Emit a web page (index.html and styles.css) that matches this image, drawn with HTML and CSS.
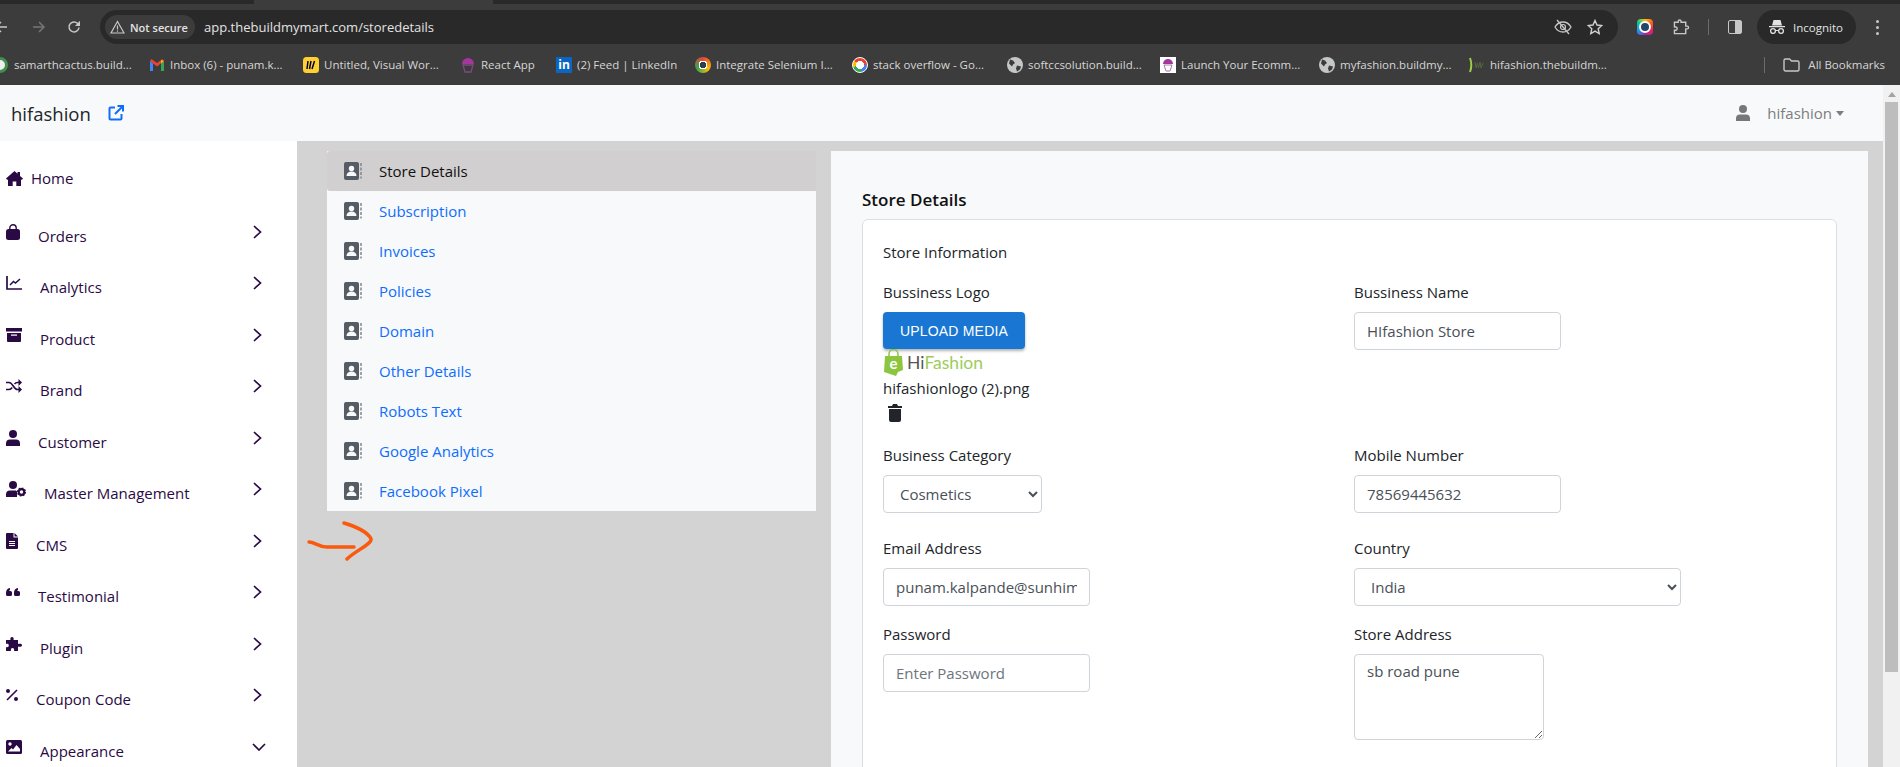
FILE: index.html
```html
<!DOCTYPE html>
<html lang="en">

<head>
    <meta charset="UTF-8" />
    <meta name="viewport" content="width=device-width, initial-scale=1.0" />
    <title>Store Details | hifashion</title>
    <link rel="stylesheet" href="styles.css">
</head>

<body>
    <!-- Browser frame -->
    <div class="tabstrip"><div class="active-tab"></div></div>
    <div class="toolbar">
        <div class="nav-btns">
            <svg class="back" width="14" height="14" viewBox="0 0 14 14"><path d="M13 7H2M7 2L2 7l5 5" fill="none" stroke="#c7c7c7" stroke-width="1.5"/></svg>
            <svg class="forward" width="14" height="14" viewBox="0 0 14 14"><path d="M1 7h11M7 2l5 5-5 5" fill="none" stroke="#757575" stroke-width="1.5"/></svg>
            <svg class="reload" width="14" height="14" viewBox="0 0 14 14"><path d="M12 7.5A5 5 0 1 1 10.4 3.2L12 5" fill="none" stroke="#c7c7c7" stroke-width="1.5"/><path d="M13 0.800V6H8z" fill="#c7c7c7"/></svg>
        </div>
        <div class="address">
            <div class="chip">
                <svg width="15" height="14" viewBox="0 0 15 14"><path d="M7.500 1.500L14 13H1zM7.500 5.500v4M7.500 10.500v1.200" fill="none" stroke="#c7c7c7" stroke-width="1.200"/></svg>
                <span>Not secure</span>
            </div>
            <span class="url">app.thebuildmymart.com/storedetails</span>
            <svg class="eye" width="18" height="16" viewBox="0 0 18 16"><path d="M1 8c2-3.500 5-5 8-5s6 1.500 8 5c-2 3.500-5 5-8 5s-6-1.500-8-5z" fill="none" stroke="#c7c7c7" stroke-width="1.300"/><circle cx="9" cy="8" r="2.500" fill="none" stroke="#c7c7c7" stroke-width="1.200"/><path d="M3 1l12 14" stroke="#c7c7c7" stroke-width="1.300"/></svg>
            <svg class="star" width="16" height="16" viewBox="0 0 16 16"><path d="M8 1.500l2 4.500 4.800.5-3.600 3.200 1 4.800L8 12.100 3.800 14.500l1-4.800L1.200 6.500 6 6z" fill="none" stroke="#d0d0d0" stroke-width="1.400"/></svg>
        </div>
        <div class="tools">
            <div class="color-app"><div class="color-app-ring"></div></div>
            <svg class="puzzle" width="17" height="16" viewBox="0 0 17 16"><path d="M1 3h4V2a1.500 1.500 0 0 1 3 0v1h5v4h1.500a1.500 1.500 0 0 1 0 3H13v5H1v-3.500h1.500a1.800 1.800 0 0 0 0-3.500H1z" transform="translate(.5 .5) scale(.94)" fill="none" stroke="#c7c7c7" stroke-width="1.500"/></svg>
            <div class="tool-sep"></div>
            <div class="side-panel"><div class="side-panel-fill"></div></div>
            <div class="incognito">
                <svg width="16" height="16" viewBox="0 0 16 16"><path d="M0 7h16v1.200H0zM3 6.500L4.500 1h7L13 6.500z" fill="#e3e3e3"/><circle cx="4" cy="12" r="2.400" fill="none" stroke="#e3e3e3" stroke-width="1.300"/><circle cx="12" cy="12" r="2.400" fill="none" stroke="#e3e3e3" stroke-width="1.300"/><path d="M6.400 11.500h3.200" stroke="#e3e3e3"/></svg>
                <span>Incognito</span>
            </div>
            <div class="dots"><i></i><i></i><i></i></div>
        </div>
    </div>

    <div class="bookmarks">
        <div class="bm bm-first"><span class="fav fav-first"></span><span>samarthcactus.build...</span></div>
        <div class="bm">
            <svg width="16" height="14" viewBox="0 0 16 14"><path d="M1 13V3l3 2.500V13z" fill="#4285f4"/><path d="M15 13V3l-3 2.500V13z" fill="#34a853"/><path d="M1 3l7 5.500L15 3l-1.500-2L8 5 2.500 1z" fill="#ea4335"/><path d="M12 5.500V2l3 1z" fill="#fbbc04"/></svg>
            <span>Inbox (6) - punam.k...</span>
        </div>
        <div class="bm">
            <svg width="16" height="16" viewBox="0 0 16 16"><rect width="16" height="16" rx="3.500" fill="#ffd02f"/><path d="M5 4L4 12M8 4L6.500 12M11.500 4L9 12" stroke="#050038" stroke-width="1.500"/></svg>
            <span>Untitled, Visual Wor...</span>
        </div>
        <div class="bm">
            <svg width="16" height="16" viewBox="0 0 16 16"><path d="M2 7a6 6 0 0 1 12 0z" fill="#a3379b"/><path d="M3 8h10l-2 7H5z" fill="none" stroke="#7d4a80" stroke-width="1.300"/></svg>
            <span>React App</span>
        </div>
        <div class="bm">
            <span class="fav fav-in">in</span>
            <span>(2) Feed | LinkedIn</span>
        </div>
        <div class="bm">
            <span class="fav fav-chrome"></span>
            <span>Integrate Selenium I...</span>
        </div>
        <div class="bm">
            <span class="fav fav-google"></span>
            <span>stack overflow - Go...</span>
        </div>
        <div class="bm">
            <svg width="16" height="16" viewBox="0 0 16 16"><circle cx="8" cy="8" r="8" fill="#c4c7c5"/><path d="M3 2.500l3 1 2 2.500-2 1.500-1 2-3-3zM10 8.500l4 1-1 3-3 2-1-3z" fill="#3c3c3c"/></svg>
            <span>softccsolution.build...</span>
        </div>
        <div class="bm">
            <svg width="16" height="16" viewBox="0 0 16 16"><rect width="16" height="16" fill="#fff"/><path d="M3 7a5 5 0 0 1 10 0z" fill="#a3379b"/><path d="M4 8h8l-2 6H6z" fill="none" stroke="#a77ba8"/></svg>
            <span>Launch Your Ecomm...</span>
        </div>
        <div class="bm">
            <svg width="16" height="16" viewBox="0 0 16 16"><circle cx="8" cy="8" r="8" fill="#c4c7c5"/><path d="M3 2.500l3 1 2 2.500-2 1.500-1 2-3-3zM10 8.500l4 1-1 3-3 2-1-3z" fill="#3c3c3c"/></svg>
            <span>myfashion.buildmy...</span>
        </div>
        <div class="bm">
            <svg width="16" height="16" viewBox="0 0 16 16"><path d="M1 1c1.500 4 1.500 10 0 14" fill="none" stroke="#9acd4a" stroke-width="2"/><path d="M6 5l1 6 1.500-5 1 5L11 5l1 6 2-5" fill="none" stroke="#55663a"/></svg>
            <span>hifashion.thebuildm...</span>
        </div>
        <div class="all-bm">
            <svg width="17" height="14" viewBox="0 0 17 14"><path d="M1 2.500A1.500 1.500 0 0 1 2.500 1h4l2 2h6A1.500 1.500 0 0 1 16 4.500v7a1.500 1.500 0 0 1-1.500 1.500h-12A1.500 1.500 0 0 1 1 11.500z" fill="none" stroke="#c7c7c7" stroke-width="1.400"/></svg>
            <span>All Bookmarks</span>
        </div>
    </div>

    <div class="page">
        <div class="app">
            <nav class="navbar">
                <span class="brand">hifashion</span>
                <svg class="ext-link" width="16" height="16" viewBox="0 0 16 16"><path d="M7 2.500H2.500a1 1 0 0 0-1 1v10a1 1 0 0 0 1 1h10a1 1 0 0 0 1-1V9M9.500 1H15v5.500M15 1L7 9" fill="none" stroke="#0d6efd" stroke-width="2"/></svg>
                <svg class="nav-user" width="16" height="16" viewBox="0 0 14 16"><circle cx="7" cy="4" r="4" fill="#777"/><path d="M0 16v-2.500A4 4 0 0 1 4 9.500h6a4 4 0 0 1 4 4V16z" fill="#777"/></svg>
                <span class="nav-name">hifashion</span>
                <span class="caret"></span>
            </nav>

            <div class="layout">
                <aside class="sidebar">
                    <a class="side-link side-home">
                        <svg width="17" height="15" viewBox="0 0 17 15"><path d="M8.500 0L11.500 2.700V1h2.500v4L17 7.600 15.800 9 15 8.300V15h-4.700v-4.500H6.700V15H2V8.300L1.200 9 0 7.600z"/></svg>
                        <span>Home</span>
                    </a>
                    <a class="side-link">
                        <svg width="14" height="16" viewBox="0 0 14 16"><rect y="5" width="14" height="11" rx="2.500"/><path d="M3.800 7V4a3.200 3.200 0 0 1 6.400 0v3" fill="none" stroke="currentColor" stroke-width="1.400"/></svg>
                        <span>Orders</span>
                        <svg class="chev" width="9" height="14" viewBox="0 0 9 14"><path d="M1 1l6.500 6L1 13" fill="none" stroke="currentColor" stroke-width="1.700"/></svg>
                    </a>
                    <a class="side-link">
                        <svg width="16" height="14" viewBox="0 0 16 14"><path d="M1 0v13h15" fill="none" stroke="currentColor" stroke-width="1.700"/><path d="M4 9l3.500-3.500 2 1.500L14 3" fill="none" stroke="currentColor" stroke-width="1.500"/></svg>
                        <span>Analytics</span>
                        <svg class="chev" width="9" height="14" viewBox="0 0 9 14"><path d="M1 1l6.500 6L1 13" fill="none" stroke="currentColor" stroke-width="1.700"/></svg>
                    </a>
                    <a class="side-link">
                        <svg width="16" height="14" viewBox="0 0 16 14"><rect width="16" height="3.500"/><path d="M1 5h14v8a1 1 0 0 1-1 1H2a1 1 0 0 1-1-1z"/><rect x="5" y="6.500" width="6" height="1.200" fill="#fff"/></svg>
                        <span>Product</span>
                        <svg class="chev" width="9" height="14" viewBox="0 0 9 14"><path d="M1 1l6.500 6L1 13" fill="none" stroke="currentColor" stroke-width="1.700"/></svg>
                    </a>
                    <a class="side-link">
                        <svg width="16" height="14" viewBox="0 0 16 14"><path d="M0 3.500h3c4 0 4.500 7 8.500 7H13M0 10.500h3c1.500 0 2.500-1 3.200-2M8.500 5c.8-1 1.700-1.500 3-1.500H13" fill="none" stroke="currentColor" stroke-width="1.600"/><path d="M12.500 0L16 3.500 12.500 7zM12.500 7L16 10.500 12.500 14z"/></svg>
                        <span>Brand</span>
                        <svg class="chev" width="9" height="14" viewBox="0 0 9 14"><path d="M1 1l6.500 6L1 13" fill="none" stroke="currentColor" stroke-width="1.700"/></svg>
                    </a>
                    <a class="side-link">
                        <svg width="14" height="16" viewBox="0 0 14 16"><circle cx="7" cy="4" r="4"/><path d="M0 16v-2.500A4 4 0 0 1 4 9.500h6a4 4 0 0 1 4 4V16z"/></svg>
                        <span>Customer</span>
                        <svg class="chev" width="9" height="14" viewBox="0 0 9 14"><path d="M1 1l6.500 6L1 13" fill="none" stroke="currentColor" stroke-width="1.700"/></svg>
                    </a>
                    <a class="side-link">
                        <svg width="20" height="16" viewBox="0 0 20 16"><circle cx="7" cy="4" r="4"/><path d="M0 16v-2.500A4 4 0 0 1 4 9.500h6l1 1v5.500z"/><circle cx="15.500" cy="11" r="2.800" fill="none" stroke="currentColor" stroke-width="2.200"/><circle cx="15.500" cy="11" r="4" fill="none" stroke="currentColor" stroke-width="1.200" stroke-dasharray="1.600 1.500"/></svg>
                        <span>Master Management</span>
                        <svg class="chev" width="9" height="14" viewBox="0 0 9 14"><path d="M1 1l6.500 6L1 13" fill="none" stroke="currentColor" stroke-width="1.700"/></svg>
                    </a>
                    <a class="side-link">
                        <svg width="12" height="16" viewBox="0 0 12 16"><path d="M1 0h6.500v4.500H12V15a1 1 0 0 1-1 1H1a1 1 0 0 1-1-1V1a1 1 0 0 1 1-1zM8.500 0L12 3.500H8.500z"/><path d="M3 8.500h6M3 10.500h6M3 12.500h6" stroke="#fff"/></svg>
                        <span>CMS</span>
                        <svg class="chev" width="9" height="14" viewBox="0 0 9 14"><path d="M1 1l6.500 6L1 13" fill="none" stroke="currentColor" stroke-width="1.700"/></svg>
                    </a>
                    <a class="side-link">
                        <svg width="14" height="8" viewBox="0 0 14 8"><path d="M0 5a5 5 0 0 1 4-5v2a2 2 0 0 0-1 1h1.500A1.500 1.500 0 0 1 6 4.500v2A1.500 1.500 0 0 1 4.500 8h-3A1.500 1.500 0 0 1 0 6.500zM8 5a5 5 0 0 1 4-5v2a2 2 0 0 0-1 1h1.500A1.500 1.500 0 0 1 14 4.500v2A1.500 1.500 0 0 1 12.500 8h-3A1.500 1.500 0 0 1 8 6.500z"/></svg>
                        <span>Testimonial</span>
                        <svg class="chev" width="9" height="14" viewBox="0 0 9 14"><path d="M1 1l6.500 6L1 13" fill="none" stroke="currentColor" stroke-width="1.700"/></svg>
                    </a>
                    <a class="side-link">
                        <svg width="16" height="16" viewBox="0 0 16 16"><path d="M0 4h4.500C4 2.500 4.500 1 6 1s2 1.500 1.500 3H12v4c1.500-.5 4-.5 4 1.200S13.500 11 12 10.500V15H8c.5-1.500 0-3-1.500-3S4.500 13.500 5 15H0v-4c1.500.5 2.800 0 2.800-1.500S1.500 7.500 0 8z"/></svg>
                        <span>Plugin</span>
                        <svg class="chev" width="9" height="14" viewBox="0 0 9 14"><path d="M1 1l6.500 6L1 13" fill="none" stroke="currentColor" stroke-width="1.700"/></svg>
                    </a>
                    <a class="side-link">
                        <svg width="12" height="12" viewBox="0 0 12 12"><path d="M11 1L1 11" stroke="currentColor" stroke-width="1.600"/><circle cx="2" cy="2" r="2"/><circle cx="10" cy="10" r="2"/></svg>
                        <span>Coupon Code</span>
                        <svg class="chev" width="9" height="14" viewBox="0 0 9 14"><path d="M1 1l6.500 6L1 13" fill="none" stroke="currentColor" stroke-width="1.700"/></svg>
                    </a>
                    <a class="side-link">
                        <svg width="16" height="14" viewBox="0 0 16 14"><rect width="16" height="14" rx="1.500"/><circle cx="4" cy="4" r="1.700" fill="#fff"/><path d="M2 11.500l3.500-3.500 1.500 1.500L10.500 5l3.500 4v2.500z" fill="#fff"/></svg>
                        <span>Appearance</span>
                        <svg class="chev-down" width="14" height="8" viewBox="0 0 14 8"><path d="M1 1l6 6 6-6" fill="none" stroke="currentColor" stroke-width="1.700"/></svg>
                    </a>
                </aside>

                <main class="content">
                    <ul class="settings-menu">
                        <li class="active"><svg class="book"><use href="#book"/></svg><a>Store Details</a></li>
                        <li><svg class="book"><use href="#book"/></svg><a>Subscription</a></li>
                        <li><svg class="book"><use href="#book"/></svg><a>Invoices</a></li>
                        <li><svg class="book"><use href="#book"/></svg><a>Policies</a></li>
                        <li><svg class="book"><use href="#book"/></svg><a>Domain</a></li>
                        <li><svg class="book"><use href="#book"/></svg><a>Other Details</a></li>
                        <li><svg class="book"><use href="#book"/></svg><a>Robots Text</a></li>
                        <li><svg class="book"><use href="#book"/></svg><a>Google Analytics</a></li>
                        <li><svg class="book"><use href="#book"/></svg><a>Facebook Pixel</a></li>
                    </ul>

                    <section class="panel">
                        <h2>Store Details</h2>
                        <div class="card">
                            <p class="card-title">Store Information</p>
                            <div class="form-grid">
                                <div class="field">
                                    <label>Bussiness Logo</label>
                                    <button class="upload-btn">UPLOAD MEDIA</button>
                                    <div class="logo">
                                        <svg width="21" height="27" viewBox="0 0 21 27"><path d="M6 8V5a4.500 4.500 0 0 1 9 0v3" fill="none" stroke="#8cc63f" stroke-width="1.500"/><path d="M2 7h17l1 14-5 2-2 4-12-4z" fill="#8cc63f"/><text x="10.500" y="20" class="logo-e">e</text></svg>
                                        <span class="logo-hi">Hi</span><span class="logo-fashion">Fashion</span>
                                    </div>
                                    <div class="file-name">hifashionlogo (2).png</div>
                                    <svg class="trash" width="14" height="18" viewBox="0 0 14 18"><path d="M0 2h4l1-2h4l1 2h4v2H0zM1 5h12v11a2 2 0 0 1-2 2H3a2 2 0 0 1-2-2z" fill="#212529"/></svg>
                                </div>
                                <div class="field">
                                    <label>Bussiness Name</label>
                                    <input class="input" type="text" value="HIfashion Store">
                                </div>
                                <div class="field">
                                    <label>Business Category</label>
                                    <select class="select select-category"><option>Cosmetics</option></select>
                                </div>
                                <div class="field">
                                    <label>Mobile Number</label>
                                    <input class="input" type="text" value="78569445632">
                                </div>
                                <div class="field">
                                    <label>Email Address</label>
                                    <input class="input" type="text" value="punam.kalpande@sunhimalaya.com">
                                </div>
                                <div class="field">
                                    <label>Country</label>
                                    <select class="select select-country"><option>India</option></select>
                                </div>
                                <div class="field">
                                    <label>Password</label>
                                    <input class="input" type="password" placeholder="Enter Password">
                                </div>
                                <div class="field">
                                    <label>Store Address</label>
                                    <textarea class="textarea">sb road pune</textarea>
                                </div>
                            </div>
                        </div>
                    </section>

                    <!-- Hand drawn arrow on the screenshot -->
                    <svg class="scribble" width="72" height="44" viewBox="0 0 72 44"><path d="M2 21c6 0 9 5 18 5h27M37 2c10 3 24 9 27 16 1 5-16 12-24 20" fill="none" stroke="#f95a0e" stroke-width="3.500" stroke-linecap="round" stroke-linejoin="round"/></svg>
                </main>
            </div>
        </div>

        <div class="scrollbar">
            <span class="scroll-arrow"></span>
            <div class="scroll-thumb"></div>
        </div>
    </div>

    <svg class="defs" width="0" height="0">
        <symbol id="book" viewBox="0 0 18 18">
            <path d="M2 0h11a2 2 0 0 1 2 2v14a2 2 0 0 1-2 2H2a2 2 0 0 1-2-2V2a2 2 0 0 1 2-2z" fill="#565c64"/>
            <circle cx="7.500" cy="6.500" r="2.700" fill="#f8f9fa"/>
            <path d="M2.500 14c0-3 2-4.500 5-4.500s5 1.500 5 4.500z" fill="#f8f9fa"/>
            <path d="M17 1v3M17 5.500v3M17 10v3M17 14.500v2" stroke="#7b8087" stroke-width="1.400"/>
        </symbol>
    </svg>
</body>

</html>
```

FILE: styles.css
```css
* {
    margin: 0;
    padding: 0;
    box-sizing: border-box;
}

html,
body {
    height: 100%;
    overflow: hidden;
}

body {
    display: flex;
    flex-direction: column;
    font-family: 'Open Sans', 'Noto Sans', sans-serif;
    font-size: 15px;
    color: #212529;
    background-color: #d3d3d3;
}

.defs {
    position: absolute;
}

/* Browser frame */
.tabstrip {
    height: 4px;
    flex-shrink: 0;
    background-color: #292929;
    padding-left: 254px;
}

.active-tab {
    width: 239px;
    height: 4px;
    background-color: #3c3c3c;
}

.toolbar {
    display: flex;
    flex-shrink: 0;
    height: 40px;
    padding-top: 6px;
    background-color: #3c3c3c;
}

.nav-btns {
    display: flex;
    align-items: center;
    width: 100px;
    flex-shrink: 0;
}

.back {
    margin-left: -6px;
}

.forward {
    margin-left: 24px;
}

.reload {
    margin-left: 21px;
}

.address {
    display: flex;
    align-items: center;
    width: 1518px;
    flex-shrink: 0;
    border-radius: 17px;
    background-color: #292929;
    padding-left: 5px;
}

.chip {
    display: flex;
    align-items: center;
    gap: 5px;
    width: 90px;
    height: 24px;
    padding-left: 5px;
    border-radius: 12px;
    background-color: #3c3c3c;
    color: #e3e3e3;
    font-size: 11px;
    font-weight: 600;
    white-space: nowrap;
}

.url {
    margin-left: 9px;
    color: #e3e3e3;
    font-size: 13px;
    flex-grow: 1;
}

.star {
    margin: 0 15px 0 15px;
}

.tools {
    display: flex;
    align-items: center;
    flex-grow: 1;
    padding-left: 19px;
}

.color-app {
    width: 16px;
    height: 16px;
    border-radius: 4px;
    padding: 2px;
    background: conic-gradient(#ffc107, #ff5722, #e91e63, #9c27b0, #2196f3, #00c8a0, #ffc107);
}

.color-app-ring {
    width: 12px;
    height: 12px;
    border-radius: 50%;
    border: 2px solid #fff;
    background-color: #24466b;
}

.puzzle {
    margin-left: 20px;
}

.tool-sep {
    width: 1px;
    height: 16px;
    margin-left: 18px;
    background-color: #6b6b6b;
}

.side-panel {
    width: 14px;
    height: 14px;
    margin-left: 19px;
    border: 1.5px solid #c7c7c7;
    border-radius: 2px;
    padding-left: 6px;
}

.side-panel-fill {
    height: 100%;
    background-color: #c7c7c7;
}

.incognito {
    display: flex;
    align-items: center;
    gap: 8px;
    width: 99px;
    height: 34px;
    margin-left: 15px;
    padding-left: 12px;
    border-radius: 17px;
    background-color: #292929;
    color: #e3e3e3;
    font-size: 11.500px;
}

.dots {
    display: flex;
    flex-direction: column;
    gap: 3px;
    margin-left: 20px;
}

.dots i {
    width: 3px;
    height: 3px;
    border-radius: 50%;
    background-color: #c7c7c7;
}

.bookmarks {
    display: grid;
    grid-template-columns: 149px 154px 157px 96px 139px 157px 155px 153px 159px 150px 150px 1fr;
    align-items: center;
    flex-shrink: 0;
    height: 41px;
    background-color: #3c3c3c;
    color: #d6d6d6;
    font-size: 11.500px;
}

.bm {
    display: flex;
    align-items: center;
    gap: 5px;
    white-space: nowrap;
    min-width: 0;
}

.bm-first {
    margin-left: -8px;
    gap: 6px;
}

.fav {
    display: block;
    width: 16px;
    height: 16px;
    flex-shrink: 0;
    border-radius: 50%;
}

.fav-first {
    background-color: #eee;
    border: 3px solid #3f8f4f;
}

.fav-in {
    border-radius: 1px;
    background-color: #0a66c2;
    color: #fff;
    font-size: 12px;
    font-weight: 700;
    line-height: 16px;
    text-align: center;
}

.fav-chrome {
    background: radial-gradient(#2c3e50 0 3px, #fff 3px 4.500px, transparent 4.500px), conic-gradient(#ea4335, #fbbc04, #34a853, #ea4335);
}

.fav-google {
    background: radial-gradient(#fff 0 4px, transparent 4px), conic-gradient(#ea4335 0 25%, #4285f4 25% 45%, #34a853 45% 70%, #fbbc04 70% 85%, #ea4335 85%);
    border: 1px solid #fff;
}

.all-bm {
    display: flex;
    align-items: center;
    justify-content: flex-end;
    gap: 8px;
    padding-right: 15px;
    white-space: nowrap;
}

.all-bm::before {
    content: '';
    width: 1px;
    height: 16px;
    margin-right: 10px;
    background-color: #6b6b6b;
}

/* Page */
.page {
    display: flex;
    flex-grow: 1;
    min-height: 0;
}

.app {
    display: flex;
    flex-direction: column;
    flex-grow: 1;
    min-width: 0;
}

.navbar {
    display: flex;
    align-items: center;
    flex-shrink: 0;
    height: 56px;
    padding: 0 39px 0 11px;
    background-color: #f8f9fa;
}

.brand {
    font-size: 18.500px;
}

.ext-link {
    margin-left: 17px;
    margin-right: auto;
}

.nav-name {
    margin-left: 16px;
    color: #7c7e80;
    font-size: 15px;
}

.caret {
    margin-left: 4px;
    border-top: 5px solid #7c7e80;
    border-left: 4px solid transparent;
    border-right: 4px solid transparent;
}

.layout {
    display: flex;
    flex-grow: 1;
    min-height: 0;
}

/* Sidebar */
.sidebar {
    width: 297px;
    flex-shrink: 0;
    padding-top: 9px;
    background-color: #fff;
    color: #2a0a45;
}

.side-link {
    display: flex;
    align-items: center;
    gap: 18px;
    height: 51.500px;
    padding: 0 35px 0 6px;
}

.side-link span {
    margin-top: 8px;
}

.side-home {
    gap: 8px;
    height: 56px;
}

.side-home span {
    margin-top: 0;
}

.side-link svg {
    flex-shrink: 0;
    fill: currentColor;
}

.chev {
    margin-left: auto;
}

.chev-down {
    margin-left: auto;
    margin-right: -4px;
}

/* Settings list */
.content {
    position: relative;
    display: flex;
    align-items: flex-start;
    gap: 15px;
    flex-grow: 1;
    min-width: 0;
    padding: 10px 15px 0 30px;
}

.settings-menu {
    width: 489px;
    flex-shrink: 0;
    list-style: none;
    background-color: #f8f9fa;
}

.settings-menu li {
    display: flex;
    align-items: center;
    gap: 17px;
    height: 40px;
    padding-left: 17px;
    color: #0d6efd;
}

.settings-menu li.active {
    background-color: #d1cfcf;
    border-radius: 3px 0 0 3px;
    color: #111;
}

.book {
    width: 18px;
    height: 18px;
}

.scribble {
    position: absolute;
    left: 10px;
    top: 380px;
}

/* Store details */
.panel {
    flex-grow: 1;
    height: 640px;
    padding: 36px 31px 0;
    background-color: #f8f9fa;
}

.panel h2 {
    font-size: 17px;
    font-weight: 600;
    line-height: 26px;
    margin-bottom: 6px;
    color: #111;
}

.card {
    height: 600px;
    padding: 20px;
    border: 1px solid #dcdfe2;
    border-radius: 6px;
    background-color: #fff;
}

.card-title {
    line-height: 24px;
    margin-bottom: 16px;
}

.form-grid {
    display: grid;
    grid-template-columns: 471px 1fr;
    grid-template-rows: 163px 93px 86px auto;
}

.field label {
    display: block;
    line-height: 24px;
    margin-bottom: 8px;
}

.input,
.select,
.textarea {
    display: block;
    height: 38px;
    border: 1px solid #ced4da;
    border-radius: 4px;
    background-color: #fff;
    color: #495057;
    font-family: inherit;
    font-size: 15px;
}

.input {
    width: 207px;
    padding: 0 12px;
}

.input::placeholder {
    color: #6c757d;
}

.select {
    padding: 0 0 0 12px;
}

.select-category {
    width: 159px;
}

.select-country {
    width: 327px;
}

.textarea {
    width: 190px;
    height: 86px;
    padding: 6px 12px;
}

.upload-btn {
    display: block;
    width: 142px;
    height: 37px;
    border: none;
    border-radius: 4px;
    background-color: #1976d2;
    box-shadow: 0 2px 3px rgba(0, 0, 0, 0.3);
    color: #fff;
    font-family: 'Liberation Sans', sans-serif;
    font-size: 14px;
    letter-spacing: 0.2px;
}

.logo {
    display: flex;
    align-items: center;
    height: 27px;
    font-family: 'Lato', sans-serif;
    font-size: 17.500px;
}

.logo svg {
    margin-right: 3px;
}

.logo-e {
    fill: #fff;
    font-size: 15px;
    font-weight: 700;
    text-anchor: middle;
}

.logo-hi {
    color: #555;
}

.logo-fashion {
    color: #9ccc5a;
}

.file-name {
    line-height: 24px;
    margin-bottom: 4px;
}

.trash {
    display: block;
    margin-left: 5px;
}

/* Fake scrollbar */
.scrollbar {
    display: flex;
    flex-direction: column;
    align-items: center;
    width: 17px;
    flex-shrink: 0;
    background-color: #f1f1f1;
}

.scroll-arrow {
    margin-top: 7px;
    border-bottom: 5px solid #a3a3a3;
    border-left: 4px solid transparent;
    border-right: 4px solid transparent;
}

.scroll-thumb {
    width: 13px;
    height: 570px;
    margin-top: 5px;
    background-color: #bdbdbd;
}
```
